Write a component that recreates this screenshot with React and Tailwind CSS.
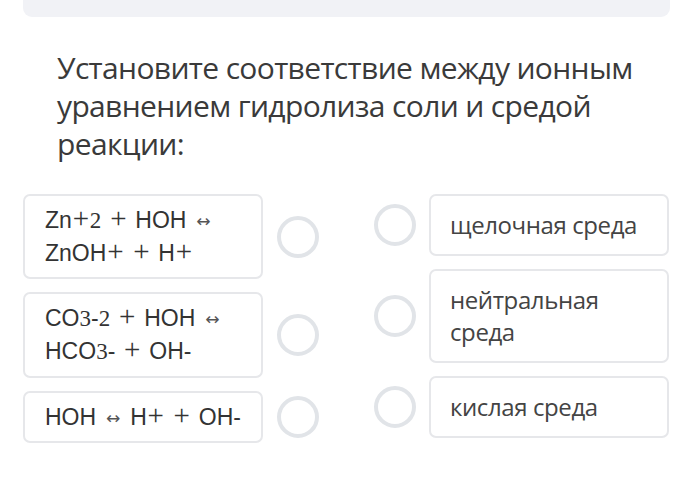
import React from "react";

const S = ({ children }) => (
  <span className="font-['Liberation_Serif',serif]">{children}</span>
);
const Pt = () => (
  <span className="inline-block w-[18px] text-center text-[29px] leading-[0] font-['Liberation_Serif',serif]">+</span>
);
const Pb = () => (
  <span className="inline-block w-[18px] mx-[8px] text-center text-[29px] leading-[0] font-['Liberation_Serif',serif]">+</span>
);
const Arr = () => (
  <span className="inline-block w-[16px] mx-[9px] text-center text-[17px] leading-none align-[1px] text-[#555] font-['DejaVu_Sans',sans-serif]">↔</span>
);

const Radio = () => (
  <div className="w-[42px] h-[42px] shrink-0 rounded-full border-[4px] border-[#e1e4e8] bg-white" />
);

const LeftBox = ({ children }) => (
  <div className="w-[240px] rounded-[7px] border-2 border-[#e6e7ea] pl-[20px] pr-1 py-[8px] text-[23px] leading-[32px] text-[#333] font-['Liberation_Sans',Arial,sans-serif] whitespace-nowrap">
    {children}
  </div>
);

const RightBox = ({ children }) => (
  <div className="w-[240px] rounded-[7px] border-2 border-[#e6e7ea] pl-[19px] pr-2 py-[13px] text-[24px] tracking-[-0.4px] leading-[32px] text-[#444] font-['Open_Sans',sans-serif]">
    {children}
  </div>
);

export default function App() {
  return (
    <div className="w-[675px] h-[485px] bg-white overflow-hidden">
      <div className="ml-[23px] w-[647px] h-[17px] rounded-b-[9px] bg-[#f1f2f6]" />
      <div className="pl-[57px] pr-2 pt-[32px] text-[30px] tracking-[-0.65px] leading-[38px] text-[#3a3a3a] font-['Open_Sans',sans-serif]">
        Установите соответствие между ионным
        <br />
        уравнением гидролиза соли и средой
        <br />
        реакции:
      </div>
      <div className="flex pl-[23px] mt-[31px] gap-[55px]">
        <div className="flex flex-col gap-[13px]">
          <div className="flex items-center gap-[14px]">
            <LeftBox>
              Zn<Pt /><S>2</S><Pb />HOH<Arr />
              <br />
              ZnOH<Pt /><Pb />H<Pt />
            </LeftBox>
            <Radio />
          </div>
          <div className="flex items-center gap-[14px]">
            <LeftBox>
              CO<S>3</S>-<S>2</S><Pb />HOH<Arr />
              <br />
              HCO<S>3</S>-<Pb />OH-
            </LeftBox>
            <Radio />
          </div>
          <div className="flex items-center gap-[14px]">
            <LeftBox>
              HOH<Arr />H<Pt /><Pb />OH-
            </LeftBox>
            <Radio />
          </div>
        </div>
        <div className="flex flex-col gap-[13px]">
          <div className="flex items-center gap-[13px]">
            <Radio />
            <RightBox>щелочная среда</RightBox>
          </div>
          <div className="flex items-center gap-[13px]">
            <Radio />
            <RightBox>
              нейтральная
              <br />
              среда
            </RightBox>
          </div>
          <div className="flex items-center gap-[13px]">
            <Radio />
            <RightBox>кислая среда</RightBox>
          </div>
        </div>
      </div>
    </div>
  );
}
